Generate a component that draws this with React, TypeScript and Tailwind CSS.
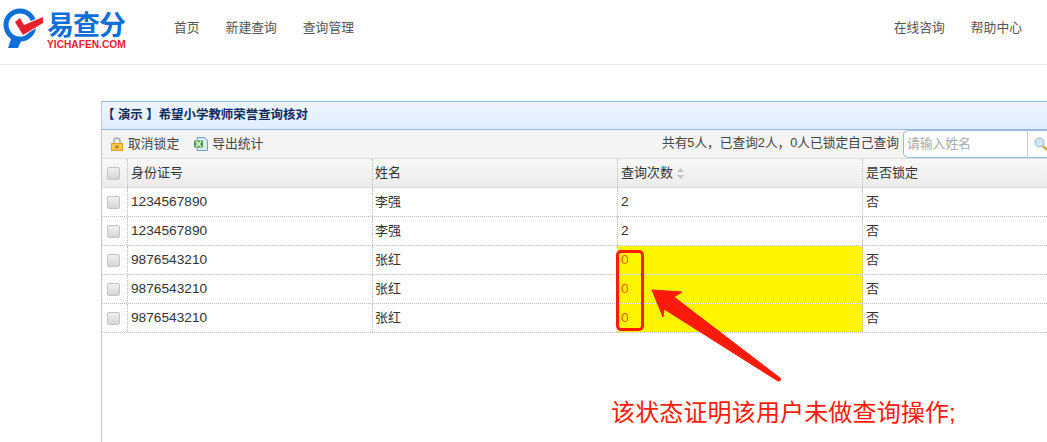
const font = "font-['Liberation_Sans','Noto_Sans_CJK_SC',sans-serif]";

const rows = [
  { id: "1234567890", name: "李强", count: "2", locked: "否" },
  { id: "1234567890", name: "李强", count: "2", locked: "否" },
  { id: "9876543210", name: "张红", count: "0", locked: "否" },
  { id: "9876543210", name: "张红", count: "0", locked: "否" },
  { id: "9876543210", name: "张红", count: "0", locked: "否" },
];

function Logo() {
  return (
    <div className="relative h-[50px] w-[127px]">
      <svg className="absolute top-0 left-0" width="46" height="50" viewBox="0 7 46 50">
        <circle cx="20" cy="25" r="14" fill="none" stroke="#0f6fd8" strokeWidth="5" />
        <path d="M12 36L8 48H18L22 39z" fill="#0f6fd8" />
        <path
          d="M15 22L20 18L24 25L43 17V23L23 35z"
          fill="#e8222c"
          stroke="#fff"
          strokeWidth="2"
          paintOrder="stroke"
        />
      </svg>
      <div className="absolute top-[3px] left-[47px] text-[27px] leading-[32px] font-bold tracking-[-1px] whitespace-nowrap text-[#0f6fd8]">
        易查分
      </div>
      <div className="absolute top-[32px] left-[47px] text-[10.2px] leading-[12px] font-bold whitespace-nowrap text-[#e8222c]">
        YICHAFEN.COM
      </div>
    </div>
  );
}

function Checkbox() {
  return (
    <span className="block h-[13px] w-[13px] rounded-[2px] border border-[#c4c4c4] bg-gradient-to-b from-[#f0f0f0] to-[#d6d6d6]" />
  );
}

function LockIcon() {
  return (
    <svg width="12" height="14" viewBox="0 0 12 14">
      <path d="M3 7V4a3 3 0 0 1 6 0v3" fill="none" stroke="#a8a8a8" strokeWidth="1.5" />
      <rect x="0.5" y="6.5" width="11" height="7" fill="#f6c94a" stroke="#dba324" />
      <rect x="4.5" y="8.5" width="3" height="3" fill="#b58420" />
    </svg>
  );
}

function ExcelIcon() {
  return (
    <svg width="14" height="14" viewBox="0 0 14 14">
      <path d="M3 0.5h7l3.5 3v10H3z" fill="#dcebfa" stroke="#6f9fd0" />
      <path d="M0 3.5h9v7H0z" fill="#4ea24a" />
      <path d="M2 4.5l5 5M7 4.5l-5 5" stroke="#fff" strokeWidth="1.3" />
    </svg>
  );
}

function Row({ row, alert }: { row: (typeof rows)[number]; alert: boolean }) {
  return (
    <div className="grid h-[29px] grid-cols-[26px_245px_245px_245px_1fr] border-b border-dotted border-[#bdbdbd] text-[13px] text-[#333]">
      <div className="flex items-center border-r border-dotted border-[#bdbdbd] pl-[5px]">
        <Checkbox />
      </div>
      <div className="flex items-center border-r border-dotted border-[#bdbdbd] pl-[3px] text-[13.7px]">{row.id}</div>
      <div className="flex items-center border-r border-dotted border-[#bdbdbd] pl-[2px]">{row.name}</div>
      <div
        className={
          alert
            ? "flex items-center border-r border-dotted border-[#bdbdbd] bg-[#fff500] pl-[3px] text-[13.7px] text-[#f5600f]"
            : "flex items-center border-r border-dotted border-[#bdbdbd] pl-[3px] text-[13.7px]"
        }
      >
        {row.count}
      </div>
      <div className="flex items-center pl-[3px]">{row.locked}</div>
    </div>
  );
}

export default function App() {
  return (
    <div className={`${font} relative h-[442px] w-[1047px] overflow-hidden bg-white`}>
      <header className="flex h-[65px] items-center justify-between border-b border-[#e6e6e6] pr-[25px] pb-[8px] text-[12.8px] text-[#555]">
        <div className="flex items-center">
          <div className="mt-[8px]">
            <Logo />
          </div>
          <nav className="ml-[47px] flex gap-[26px]">
            <a>首页</a>
            <a>新建查询</a>
            <a>查询管理</a>
          </nav>
        </div>
        <nav className="flex gap-[26px]">
          <a>在线咨询</a>
          <a>帮助中心</a>
        </nav>
      </header>

      <section className="mt-[36px] ml-[101px] h-[400px] w-[1000px] border-l border-[#c6c6c6]">
        <div className="flex h-[29px] items-center border-y border-[#95b8e7] bg-gradient-to-b from-[#eff5ff] to-[#e0ecff] text-[12.45px] font-bold text-[#0e2d5f]">
          【 演示 】希望小学教师荣誉查询核对
        </div>
        <div className="flex h-[29px] items-center border-b border-[#dddddd] bg-[#f4f4f4] text-[12.8px] text-[#444]">
          <div className="ml-[9px] flex w-[161px] items-center pb-[1px]">
            <div className="flex items-center gap-[5px]">
              <LockIcon />
              <span>取消锁定</span>
            </div>
            <div className="ml-[15px] flex items-center gap-[4px]">
              <ExcelIcon />
              <span>导出统计</span>
            </div>
          </div>
          <div className="ml-[390px] w-[241px] text-[12.7px] whitespace-nowrap">共有5人，已查询2人，0人已锁定自己查询</div>
          <div className="flex h-[28px] w-[170px] items-center rounded-l-[5px] border border-[#95b8e7] bg-white">
            <span className="w-[124px] border-r border-[#cccccc] pl-[3px] text-[12.8px] leading-[26px] text-[#a9a9a9]">请输入姓名</span>
            <svg className="ml-[6px]" width="14" height="14" viewBox="0 0 14 14">
              <circle cx="5.5" cy="5.5" r="4.5" fill="#cfe4f7" stroke="#8fb3d4" />
              <path d="M9 9l4 4" stroke="#e0a030" strokeWidth="2.4" />
            </svg>
          </div>
        </div>
        <div className="grid h-[29px] grid-cols-[26px_245px_245px_245px_1fr] border-b border-[#dddddd] bg-gradient-to-b from-[#f9f9f9] to-[#ececec] text-[13px] text-[#333]">
          <div className="flex items-center border-r border-dotted border-[#bdbdbd] pl-[5px]">
            <Checkbox />
          </div>
          <div className="flex items-center border-r border-dotted border-[#bdbdbd] pl-[3px]">身份证号</div>
          <div className="flex items-center border-r border-dotted border-[#bdbdbd] pl-[2px]">姓名</div>
          <div className="flex items-center gap-[3px] border-r border-dotted border-[#bdbdbd] pl-[3px]">
            查询次数
            <svg width="9" height="11" viewBox="0 0 9 11">
              <path d="M4.5 0L8 4H1zM4.5 11L1 7h7z" fill="#c4c4c4" />
            </svg>
          </div>
          <div className="flex items-center pl-[3px]">是否锁定</div>
        </div>
        {rows.map((row, i) => (
          <Row key={i} row={row} alert={row.count === "0"} />
        ))}
      </section>

      {/* annotation drawn over the table */}
      <div className="absolute top-[250px] left-[616px] h-[81px] w-[28px] rounded-[5px] border-[3px] border-[#ff1a0a]" />
      <svg className="absolute top-[285px] left-[645px]" width="145" height="105" viewBox="645 285 145 105">
        <path d="M652 290L682 292L674 297L780 378Q782 381 778 381L664 309L663 317z" fill="#ff1a0a" stroke="#ff1a0a" strokeLinejoin="round" />
      </svg>
      <div className="absolute top-[397px] left-[611px] text-[24px] leading-[32px] tracking-[0.15px] whitespace-nowrap text-[#ff1a0a]">
        该状态证明该用户未做查询操作;
      </div>
    </div>
  );
}
